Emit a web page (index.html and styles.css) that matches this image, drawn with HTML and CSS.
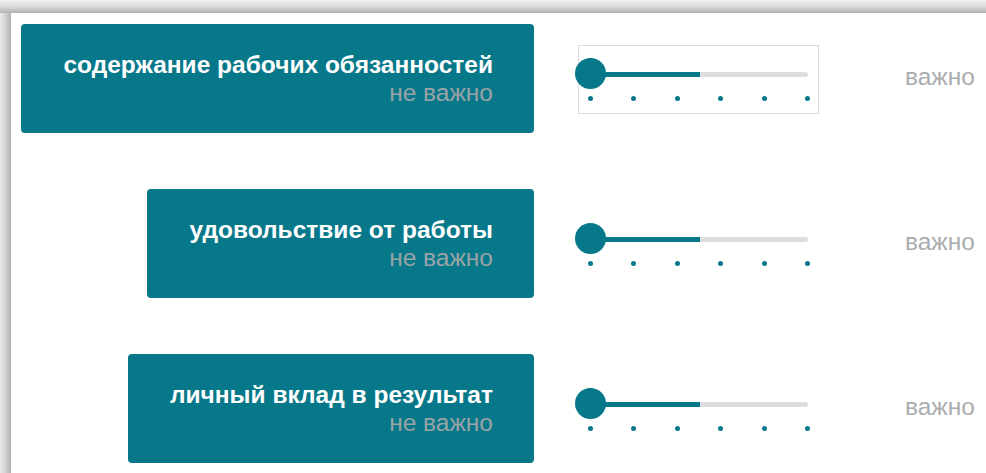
FILE: index.html
```html
<!DOCTYPE html>
<html lang="ru">
<head>
<meta charset="utf-8">
<title>Ценности работы</title>
<link rel="stylesheet" href="styles.css">
</head>
<body>
<div class="panel">
  <div class="row">
    <div class="label-col">
      <div class="card">
        <div class="card-title">содержание рабочих обязанностей</div>
        <div class="card-sub">не важно</div>
      </div>
    </div>
    <div class="slider slider-focus">
      <div class="track"><div class="fill"></div></div>
      <div class="thumb"></div>
      <div class="dots"><span></span><span></span><span></span><span></span><span></span><span></span></div>
    </div>
    <div class="max-label">важно</div>
  </div>

  <div class="row">
    <div class="label-col">
      <div class="card">
        <div class="card-title">удовольствие от работы</div>
        <div class="card-sub">не важно</div>
      </div>
    </div>
    <div class="slider">
      <div class="track"><div class="fill"></div></div>
      <div class="thumb"></div>
      <div class="dots"><span></span><span></span><span></span><span></span><span></span><span></span></div>
    </div>
    <div class="max-label">важно</div>
  </div>

  <div class="row">
    <div class="label-col">
      <div class="card">
        <div class="card-title">личный вклад в результат</div>
        <div class="card-sub">не важно</div>
      </div>
    </div>
    <div class="slider">
      <div class="track"><div class="fill"></div></div>
      <div class="thumb"></div>
      <div class="dots"><span></span><span></span><span></span><span></span><span></span><span></span></div>
    </div>
    <div class="max-label">важно</div>
  </div>
</div>
</body>
</html>
```

FILE: styles.css
```css
html, body {
  margin: 0;
  height: 100%;
  overflow: hidden;
}

/* window frame: shaded strips along the top and left edges */
body {
  background:
    linear-gradient(180deg, #f0f0f0 0px, #dcdcdc 6px, #c4c4c4 10px, #b2b2b2 13px) left top / 100% 13px no-repeat,
    linear-gradient(90deg, #e8e8e8 0px, #d4d4d4 5px, #bdbdbd 9px, #b0b0b0 11px) left top / 11px 100% no-repeat,
    #d8d8d8;
  font-family: "Liberation Sans", Arial, sans-serif;
}

.panel {
  margin: 13px 0 0 11px;
  height: calc(100% - 13px);
  background: #ffffff;
  padding: 11px 0 0 10px;
  box-sizing: border-box;
  display: flex;
  flex-direction: column;
  gap: 56px;
}

.row {
  display: flex;
  align-items: flex-start;
}

.label-col {
  width: 513px;
  display: flex;
  justify-content: flex-end;
  flex: none;
}

.card {
  background: #07778a;
  border-radius: 4px;
  padding: 27px 41px 26px 42px;
  text-align: right;
  font-size: 24.5px;
  line-height: 28px;
  white-space: nowrap;
}

.card-title {
  color: #ffffff;
  font-weight: bold;
}

.card-sub {
  color: #9aa4a7;
}

.slider {
  position: relative;
  margin: 21px 0 0 44px;
  width: 241px;
  height: 69px;
  box-sizing: border-box;
  border: 1px solid transparent;
  flex: none;
}

.slider-focus {
  border-color: #dcdcdc;
}

.track {
  margin: 26px 0 0 11px;
  width: 218px;
  height: 5px;
  border-radius: 3px;
  background: #dddddd;
  overflow: hidden;
}

.fill {
  width: 110px;
  height: 100%;
  background: #07778a;
}

.thumb {
  position: absolute;
  left: -4px;
  top: 12px;
  width: 31px;
  height: 31px;
  border-radius: 50%;
  background: #07778a;
}

.dots {
  display: flex;
  justify-content: space-between;
  margin: 19px 0 0 9px;
  width: 222px;
}

.dots span {
  width: 5px;
  height: 5px;
  border-radius: 50%;
  background: #07778a;
}

.max-label {
  margin: 39px 0 0 86px;
  font-size: 24.5px;
  line-height: 28px;
  color: #a9adae;
}
```
